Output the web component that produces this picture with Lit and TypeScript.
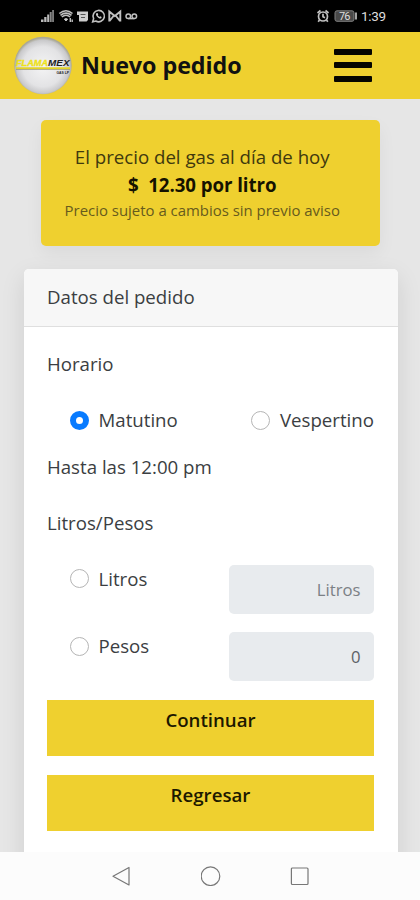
import { LitElement, html, css, svg } from "lit";
import { customElement, property, state } from "lit/decorators.js";
import { classMap } from "lit/directives/class-map.js";

@customElement("status-bar")
class StatusBar extends LitElement {
  static styles = css`
    :host { display: block; height: 32px; background: #000; }
    svg { display: block; }
    text { font-family: Roboto, "Open Sans", sans-serif; font-weight: 400; fill: #ddd; stroke: none; }
  `;
  render() {
    return html`<svg width="420" height="32" viewBox="0 0 420 32" fill="none" stroke="#c0c0c0">
      <path d="M41 19.500h2.500V22H41zM44.200 17h2.300v5h-2.300zM47.200 14.500h2V22h-2z" fill="#bbb" stroke="none" />
      <path d="M49.700 12h2v10h-2zM52.200 10h1.700v12h-1.700z" fill="#888" stroke="none" />
      <g stroke-width="1.600">
        <path d="M59.300 13.500Q66 8 72.500 13.500M61.800 17Q66 13.500 70.200 17M60.500 15.300Q66 10.800 71.500 15.300" />
        <path d="M64.300 19.200Q66 18 67.700 19.200L66 21Z" fill="#ccc" stroke-width="1" />
        <path d="M70.300 18v4M72.200 19.500v2.500" stroke-width="1.400" />
      </g>
      <path d="M77 11.500h11v8.500l-1.500 1.500H79V15h-2z" fill="#ccc" stroke="none" />
      <path d="M80.500 14.500h5M81 17.500h4" stroke="#555" />
      <path d="M92.700 21.800l.9-3.200A5.700 5.700 0 1 1 95.800 21z" stroke-width="1.600" />
      <path d="M96.300 13.300c-1.500 2 2.500 6 4.800 5.200l.6-1.400-1.600-.8-.8.7-1.600-1.700.6-.9-.7-1.400z" fill="#ccc" stroke="none" />
      <path d="M109.300 21.500v-10l5.500 4.500 5.500-4.500v10M109.500 21l4-5M120 21l-4-5" stroke-width="1.900" />
      <g stroke-width="1.500"><circle cx="128.300" cy="16.300" r="2.300" /><circle cx="134.300" cy="16.300" r="2.300" /><path d="M128.300 18.600h6" /></g>
      <g stroke-width="1.700"><circle cx="323" cy="16.500" r="4.500" /><path d="M323 13.700v3l2 1M317.500 13l3-2.500M328.500 13l-3-2.500M319.500 20l-1.300 1.800M326.500 20l1.300 1.800" /></g>
      <rect x="335" y="10.800" width="19" height="10.500" rx="2" fill="#484848" stroke="#808080" />
      <path d="M356 12.500v7" stroke-width="1.700" />
      <text x="339" y="20.200" font-size="11" textLength="11.500">76</text>
      <text x="361" y="21.200" font-size="13.500" textLength="25">1:39</text>
    </svg>`;
  }
}

@customElement("brand-logo")
class BrandLogo extends LitElement {
  static styles = css`
    :host { display: block; width: 58px; height: 59px; }
    svg { display: block; }
    text { font-family: "Liberation Sans", sans-serif; font-weight: 700; }
    .name { font-style: italic; }
  `;
  render() {
    return html`<svg width="58" height="59" viewBox="0 0 58 59">
      <defs>
        <radialGradient id="disc" cx=".5" cy=".52" r=".5">
          <stop offset="0" stop-color="#f4f4f5" /><stop offset=".7" stop-color="#e3e3e5" />
          <stop offset=".92" stop-color="#c9c9cb" /><stop offset="1" stop-color="#aaa896" />
        </radialGradient>
      </defs>
      <circle cx="29" cy="29.500" r="28.700" fill="url(#disc)" />
      <text class="name" x="2" y="29.500" font-size="9.500" fill="#eee21a" stroke="#eee21a" stroke-width=".4" textLength="32" lengthAdjust="spacingAndGlyphs">FLAMA</text>
      <text class="name" x="34" y="29.500" font-size="9.500" fill="#222" textLength="21.500" lengthAdjust="spacingAndGlyphs">MEX</text>
      <path d="M2 32.200h54" stroke="#e3d426" stroke-width="1.800" />
      <path d="M2 33.500h54" stroke="#999560" stroke-width=".7" />
      <text x="42.500" y="37.800" font-size="4" fill="#222" textLength="12.500" lengthAdjust="spacingAndGlyphs">GAS LP</text>
    </svg>`;
  }
}

@customElement("radio-option")
class RadioOption extends LitElement {
  @property() label = "";
  @property({ type: Boolean }) checked = false;
  static styles = css`
    :host { display: flex; align-items: center; gap: 9.500px; height: 28px; }
    .dot { box-sizing: border-box; width: 19px; height: 19px; border-radius: 50%; border: 1.200px solid #b5b5b5; background: #fff; }
    .dot.on { border: 6px solid #087bff; }
  `;
  render() {
    return html`<span class=${classMap({ dot: true, on: this.checked })}></span><span>${this.label}</span>`;
  }
}

@customElement("nav-bar")
class NavBar extends LitElement {
  static styles = css`
    :host { display: flex; justify-content: center; gap: 69px; padding: 14px 0 0 1px; box-sizing: border-box; height: 48px; background: #fcfcfc; }
    svg { display: block; }
  `;
  render() {
    const icon = (shape: unknown) => html`<svg width="20" height="20" viewBox="0 0 20 20" fill="none" stroke="#777" stroke-width="1.200" stroke-linejoin="round">${shape}</svg>`;
    return html`
      ${icon(svg`<path d="M1 10.300L17 1.500V19z" />`)}
      ${icon(svg`<circle cx="9.500" cy="10.200" r="9.300" />`)}
      ${icon(svg`<rect x="1.400" y="2" width="16.600" height="16.500" rx="1" />`)}
    `;
  }
}

@customElement("app-root")
class AppRoot extends LitElement {
  @state() private shift = "Matutino";
  static styles = css`
    :host { display: flex; flex-direction: column; width: 420px; height: 900px; overflow: hidden; box-sizing: border-box;
      background: #e6e6e6; color: #3b3e42; font: 400 18.670px/28px "Open Sans", "Noto Sans", sans-serif; }
    header { display: flex; align-items: center; height: 66.500px; flex: none; background: #efd02f; padding: 0 48px 0 14px; box-sizing: border-box; }
    h1 { margin: 0 auto 0 9px; font-size: 23.300px; line-height: 32px; font-weight: 700; letter-spacing: -.05px; color: #111; white-space: nowrap; }
    .menu { display: flex; flex-direction: column; gap: 7.500px; width: 38px; }
    .menu i { height: 6px; border-radius: 1px; background: #050500; }
    main { flex: 1; min-height: 0; overflow: hidden; display: flex; flex-direction: column; align-items: center; }
    .price { flex: none; box-sizing: border-box; width: 339px; height: 126px; margin-top: 21.500px; padding: 23px 15.500px 0 0; text-align: center;
      border-radius: 5px; background: #efd02f; box-shadow: 0 8px 18px rgba(0,0,0,.05); white-space: nowrap; color: #40390e; }
    .price div { height: 28px; }
    .amount { font-weight: 700; letter-spacing: -.05px; color: #151200; }
    .amount span { margin-right: 9.500px; }
    .price .note { font-size: 14.930px; line-height: 22px; color: #675b1d; }
    .card { flex: none; width: 374px; height: 620px; margin: 23px 0 0 1px; border-radius: 5px; background: #fff; box-shadow: 0 8px 24px rgba(0,0,0,.1); }
    .head { box-sizing: border-box; height: 58px; padding: 13.500px 23.500px; background: #f7f7f7; border-bottom: 1.500px solid #dfdfdf; border-radius: 5px 5px 0 0; }
    .body { padding: 23px 23.500px; white-space: nowrap; }
    .shifts { display: flex; justify-content: space-between; padding-left: 23px; margin: 28px 0 18.500px; }
    .units { margin-top: 28.200px; }
    .field { display: flex; justify-content: space-between; align-items: flex-start; padding-left: 23px; height: 48.700px; margin-bottom: 18.900px; }
    .box { box-sizing: border-box; width: 145.500px; height: 48.700px; padding: 0 13.500px; border-radius: 5px; background: #e8ebee; text-align: right; font-size: 16.700px; line-height: 49px; color: #7b8085; }
    .box.filled { color: #5c6166; }
    .btn { display: block; width: 100%; box-sizing: border-box; height: 56px; margin: 0 0 19px; padding: 6px 0 22px; border: 0; background: #efd02f; color: #1c1800; font: 600 18.670px/28px "Open Sans", sans-serif; text-align: center; }
  `;
  render() {
    const fields = [{ name: "Litros", value: "Litros", filled: false }, { name: "Pesos", value: "0", filled: true }];
    return html`
      <status-bar></status-bar>
      <header>
        <brand-logo></brand-logo>
        <h1>Nuevo pedido</h1>
        <div class="menu"><i></i><i></i><i></i></div>
      </header>
      <main>
        <section class="price">
          <div>El precio del gas al día de hoy</div>
          <div class="amount"><span>$</span>12.30 por litro</div>
          <div class="note">Precio sujeto a cambios sin previo aviso</div>
        </section>
        <section class="card">
          <div class="head">Datos del pedido</div>
          <div class="body">
            <div>Horario</div>
            <div class="shifts">
              ${["Matutino", "Vespertino"].map((s) => html`<radio-option .label=${s} .checked=${s === this.shift} @click=${() => (this.shift = s)}></radio-option>`)}
            </div>
            <div>Hasta las 12:00 pm</div>
            <div class="units">Litros/Pesos</div>
            <div class="units">
              ${fields.map((f) => html`<div class="field"><radio-option .label=${f.name}></radio-option><div class=${classMap({ box: true, filled: f.filled })}>${f.value}</div></div>`)}
            </div>
            <button class="btn">Continuar</button>
            <button class="btn">Regresar</button>
          </div>
        </section>
      </main>
      <nav-bar></nav-bar>
    `;
  }
}
